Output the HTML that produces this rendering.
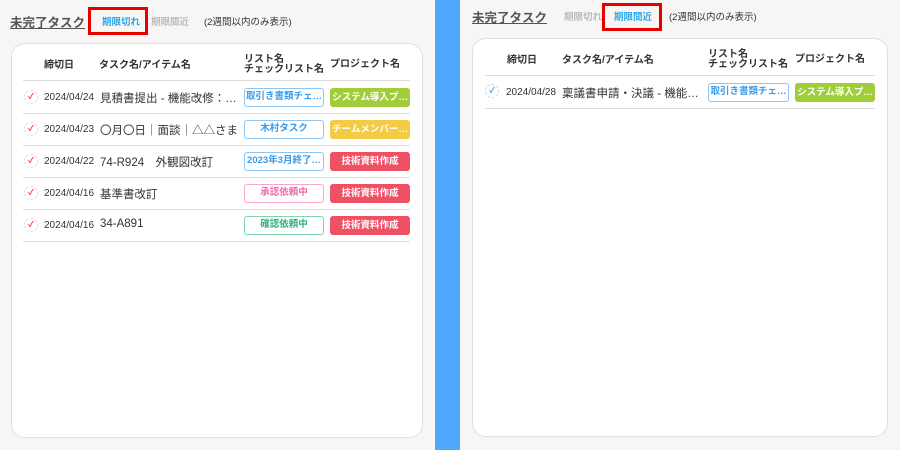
<!DOCTYPE html><html><head><meta charset="utf-8"><style>
*{box-sizing:border-box;margin:0;padding:0}
body{width:900px;height:450px;background:#f7f6f4;font-family:"Liberation Sans","Noto Sans CJK JP",sans-serif;position:relative;overflow:hidden;color:#333}
.blue{position:absolute;left:435px;top:0;width:25px;height:450px;background:#4ea8fb}
.abs{position:absolute;white-space:nowrap}
.title{font-size:12.5px;font-weight:bold;color:#555;text-decoration:underline}
.tab{font-size:9.5px;font-weight:bold}
.red{position:absolute;border:3px solid #e60000}
.card{position:absolute;background:#fff;border:1px solid #e2e0dd;border-radius:14px}
.hd{font-size:10px;font-weight:bold;color:#333;line-height:10px}
.line{position:absolute;height:1px;background:#ddd}
.chk{position:absolute;width:14px;height:14px;border:1px dashed #ddd;border-radius:50%;font-size:8px;text-align:center;line-height:12px;font-weight:bold}
.date{font-size:10px;color:#333}
.task{font-size:11.5px;color:#333;overflow:hidden;text-overflow:ellipsis}
.b{position:absolute;height:19px;border-radius:3px;font-size:9.5px;font-weight:bold;text-align:center;line-height:19px;overflow:hidden;white-space:nowrap;text-overflow:ellipsis;padding:0 1px}
.o{border:1.5px solid;line-height:16px}
.f{color:#fff}
</style></head><body>
<div class="blue"></div>
<div class="abs title" style="left:10px;top:12px">未完了タスク</div>
<div class="abs tab" style="left:102px;top:14px;color:#2aa8f0">期限切れ</div>
<div class="red" style="left:88px;top:7px;width:60px;height:28px"></div>
<div class="abs tab" style="left:151px;top:14px;color:#bbb">期限間近</div>
<div class="abs" style="left:204px;top:14px;font-size:9.5px;color:#333">(2週間以内のみ表示)</div>
<div class="card" style="left:11px;top:43px;width:412px;height:395px"></div>
<div class="abs hd" style="left:44px;top:61px">締切日</div>
<div class="abs hd" style="left:99px;top:61px">タスク名/アイテム名</div>
<div class="abs hd" style="left:244px;top:55px">リスト名<br>チェックリスト名</div>
<div class="abs hd" style="left:330px;top:60px">プロジェクト名</div>
<div class="line" style="left:23px;top:80px;width:387px"></div>
<div class="line" style="left:23px;top:113px;width:387px"></div>
<div class="line" style="left:23px;top:145px;width:387px"></div>
<div class="line" style="left:23px;top:177px;width:387px"></div>
<div class="line" style="left:23px;top:209px;width:387px"></div>
<div class="line" style="left:23px;top:241px;width:387px"></div>

<div class="chk" style="left:24px;top:90px;color:#e33">✓</div>
<div class="abs date" style="left:44px;top:92px">2024/04/24</div>
<div class="abs task" style="left:100px;top:90px;width:138px">見積書提出 - 機能改修：●…</div>
<div class="b o" style="left:244px;top:88px;width:80px;color:#3a9be8;border-color:#8cc6f5">取引き書類チェ…</div>
<div class="b f" style="left:330px;top:88px;width:80px;background:#a1cd3a">システム導入プ…</div>

<div class="chk" style="left:24px;top:122px;color:#e33">✓</div>
<div class="abs date" style="left:44px;top:124px">2024/04/23</div>
<div class="abs task" style="left:100px;top:122px">〇月〇日｜面談｜△△さま</div>
<div class="b o" style="left:244px;top:120px;width:80px;color:#3a9be8;border-color:#8cc6f5">木村タスク</div>
<div class="b f" style="left:330px;top:120px;width:80px;background:#f4cb44">チームメンバー…</div>

<div class="chk" style="left:24px;top:154px;color:#e33">✓</div>
<div class="abs date" style="left:44px;top:156px">2024/04/22</div>
<div class="abs task" style="left:100px;top:154px">74-R924　外観図改訂</div>
<div class="b o" style="left:244px;top:152px;width:80px;color:#3a9be8;border-color:#8cc6f5">2023年3月終了…</div>
<div class="b f" style="left:330px;top:152px;width:80px;background:#f05064">技術資料作成</div>

<div class="chk" style="left:24px;top:186px;color:#e33">✓</div>
<div class="abs date" style="left:44px;top:188px">2024/04/16</div>
<div class="abs task" style="left:100px;top:186px">基準書改訂</div>
<div class="b o" style="left:244px;top:184px;width:80px;color:#f06aa8;border-color:#f7a8cc">承認依頼中</div>
<div class="b f" style="left:330px;top:184px;width:80px;background:#f05064">技術資料作成</div>

<div class="chk" style="left:24px;top:218px;color:#e33">✓</div>
<div class="abs date" style="left:44px;top:220px">2024/04/16</div>
<div class="abs task" style="left:100px;top:218px">34-A891</div>
<div class="b o" style="left:244px;top:216px;width:80px;color:#2fb07a;border-color:#7fd3ae">確認依頼中</div>
<div class="b f" style="left:330px;top:216px;width:80px;background:#f05064">技術資料作成</div>

<div class="abs title" style="left:472px;top:7px">未完了タスク</div>
<div class="abs tab" style="left:564px;top:9px;color:#bbb">期限切れ</div>
<div class="abs tab" style="left:614px;top:9px;color:#2aa8f0">期限間近</div>
<div class="red" style="left:602px;top:3px;width:60px;height:28px"></div>
<div class="abs" style="left:669px;top:9px;font-size:9.5px;color:#333">(2週間以内のみ表示)</div>
<div class="card" style="left:472px;top:38px;width:416px;height:399px"></div>
<div class="abs hd" style="left:507px;top:56px">締切日</div>
<div class="abs hd" style="left:562px;top:56px">タスク名/アイテム名</div>
<div class="abs hd" style="left:708px;top:50px">リスト名<br>チェックリスト名</div>
<div class="abs hd" style="left:795px;top:55px">プロジェクト名</div>
<div class="line" style="left:485px;top:75px;width:390px"></div>
<div class="line" style="left:485px;top:108px;width:390px"></div>
<div class="chk" style="left:485px;top:84px;color:#3a9be8;border-color:#b8dcf8">✓</div>
<div class="abs date" style="left:506px;top:87px">2024/04/28</div>
<div class="abs task" style="left:562px;top:85px;width:139px">稟議書申請・決議 - 機能改…</div>
<div class="b o" style="left:708px;top:83px;width:81px;color:#3a9be8;border-color:#8cc6f5">取引き書類チェ…</div>
<div class="b f" style="left:795px;top:83px;width:80px;background:#a1cd3a">システム導入プ…</div>
</body></html>
